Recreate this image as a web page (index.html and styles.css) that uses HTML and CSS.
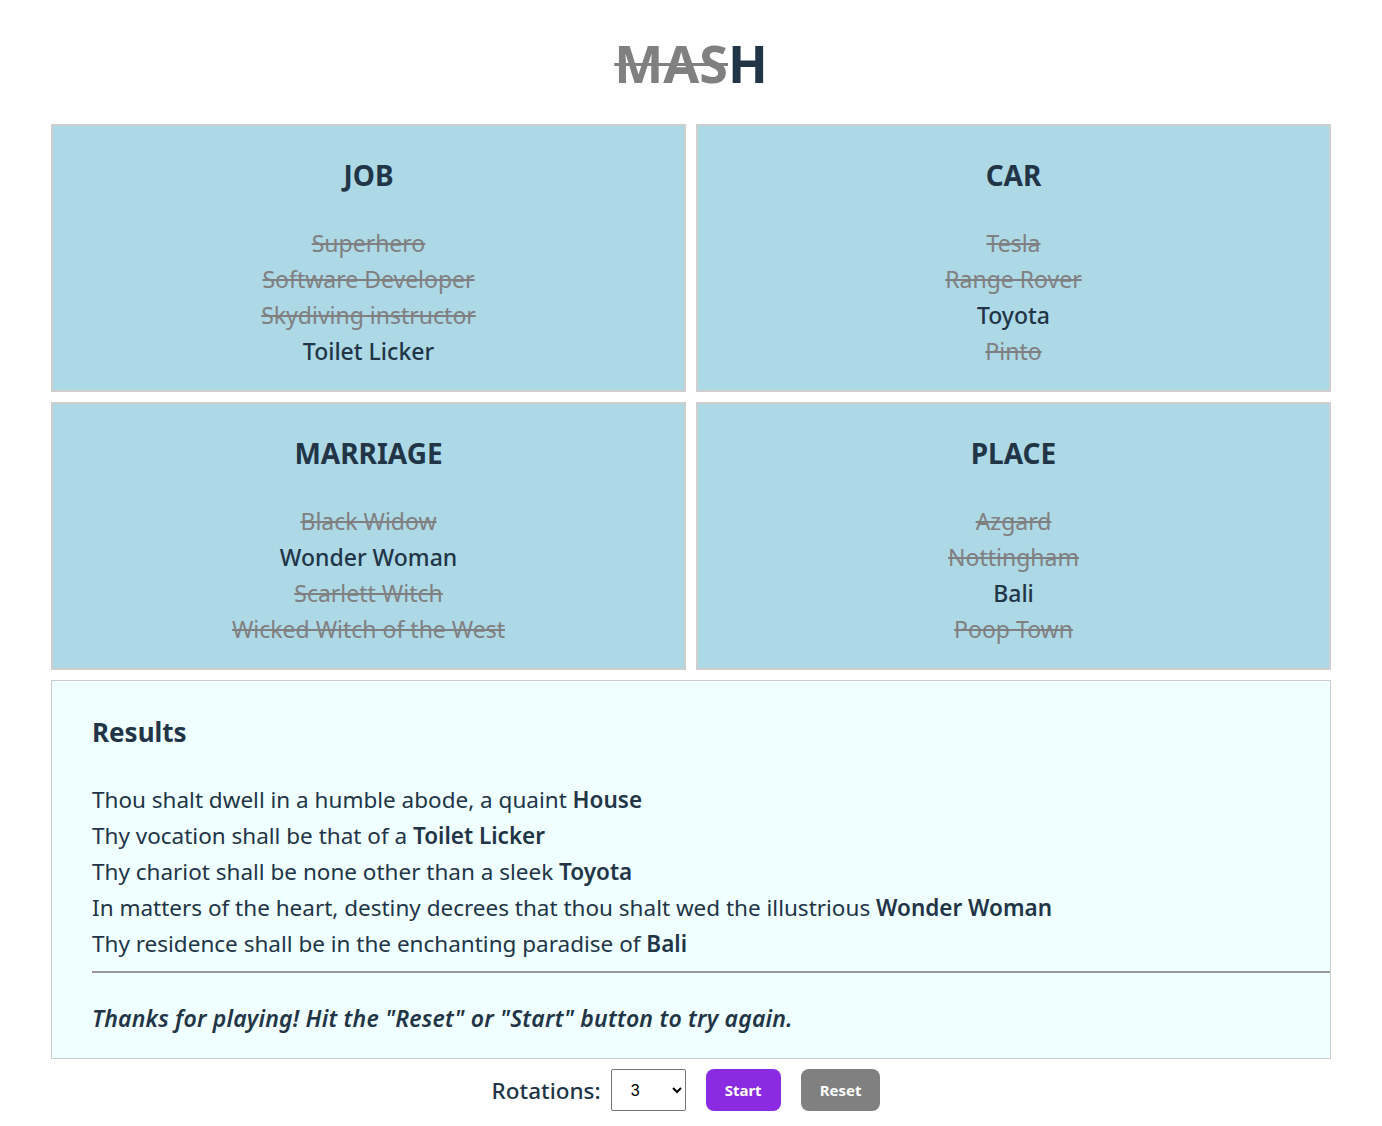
FILE: index.html
```html
<!DOCTYPE html>
<html lang="en">
<head>
<meta charset="utf-8">
<title>MASH</title>
<link rel="stylesheet" href="styles.css">
</head>
<body>
<div class="root">
  <h1 class="title"><span class="struck">MAS</span>H</h1>
  <div class="grid">
    <section class="card">
      <h2 class="card-title">JOB</h2>
      <ul class="options">
        <li class="out">Superhero</li>
        <li class="out">Software Developer</li>
        <li class="out">Skydiving instructor</li>
        <li>Toilet Licker</li>
      </ul>
    </section>
    <section class="card">
      <h2 class="card-title">CAR</h2>
      <ul class="options">
        <li class="out">Tesla</li>
        <li class="out">Range Rover</li>
        <li>Toyota</li>
        <li class="out">Pinto</li>
      </ul>
    </section>
    <section class="card">
      <h2 class="card-title">MARRIAGE</h2>
      <ul class="options">
        <li class="out">Black Widow</li>
        <li>Wonder Woman</li>
        <li class="out">Scarlett Witch</li>
        <li class="out">Wicked Witch of the West</li>
      </ul>
    </section>
    <section class="card">
      <h2 class="card-title">PLACE</h2>
      <ul class="options">
        <li class="out">Azgard</li>
        <li class="out">Nottingham</li>
        <li>Bali</li>
        <li class="out">Poop Town</li>
      </ul>
    </section>
  </div>
  <section class="results">
    <h2 class="results-title">Results</h2>
    <div class="results-lines">
      <p>Thou shalt dwell in a humble abode, a quaint <b>House</b></p>
      <p>Thy vocation shall be that of a <b>Toilet Licker</b></p>
      <p>Thy chariot shall be none other than a sleek <b>Toyota</b></p>
      <p>In matters of the heart, destiny decrees that thou shalt wed the illustrious <b>Wonder Woman</b></p>
      <p>Thy residence shall be in the enchanting paradise of <b>Bali</b></p>
    </div>
    <hr class="divider">
    <p class="thanks">Thanks for playing! Hit the "Reset" or "Start" button to try again.</p>
  </section>
  <div class="controls">
    <label class="rot-label" for="rot">Rotations:</label>
    <select id="rot" class="rot-select">
      <option>1</option><option>2</option><option selected>3</option><option>4</option><option>5</option>
    </select>
    <button class="btn btn-start">Start</button>
    <button class="btn btn-reset">Reset</button>
  </div>
</div>
</body>
</html>
```
FILE: styles.css
```css
* { box-sizing: border-box; }
body {
  margin: 0;
  font-family: "Noto Sans", "Open Sans", sans-serif;
  color: #213547;
  background: #fff;
}
.root {
  width: 1280px;
  margin: 0 auto;
  text-align: center;
}
.title {
  margin: 0;
  padding-top: 29px;
  height: 124px;
  font-size: 52px;
  line-height: 68px;
  font-weight: 700;
  color: #213547;
}
.struck {
  color: #808080;
  text-decoration: line-through;
  text-decoration-thickness: 3px;
}
.grid {
  display: grid;
  grid-template-columns: 1fr 1fr;
  gap: 10px;
}
.card {
  background: #add8e6;
  border: 2px solid #cfcfcf;
  padding: 31px 0 21px;
}
.card-title {
  margin: 0 0 32px;
  font-size: 28px;
  line-height: 36px;
  font-weight: 700;
}
.options {
  list-style: none;
  margin: 0;
  padding: 0;
  font-size: 23px;
  line-height: 36px;
  font-weight: 500;
}
.out {
  color: #808080;
  text-decoration: line-through;
  font-weight: 400;
}
.results {
  margin-top: 10px;
  background: #f0ffff;
  border: 1px solid #cccccc;
  padding: 33px 0 22px 40px;
  text-align: left;
}
.results-title {
  margin: 0 0 32px;
  font-size: 26px;
  line-height: 36px;
  font-weight: 700;
}
.results-lines p {
  margin: 0;
  font-size: 22.5px;
  line-height: 36px;
}
.results-lines b { font-weight: 600; }
.divider {
  margin: 9px 0 27px;
  border: 0;
  border-top: 2px solid #999;
}
.thanks {
  margin: 0;
  font-size: 23px;
  letter-spacing: 0.2px;
  line-height: 36px;
  font-style: italic;
  font-weight: 600;
}
.controls {
  display: flex;
  justify-content: center;
  align-items: center;
  margin-top: 10px;
  padding-right: 10px;
}
.rot-label {
  font-size: 22.5px;
  font-weight: 500;
  margin-right: 10px;
}
.rot-select {
  width: 75px;
  height: 42px;
  padding-left: 15px;
  font-size: 16px;
  font-family: "Liberation Sans", Arial, sans-serif;
  border: 1px solid #767676;
  border-radius: 2px;
  background: #fff;
  margin-right: 20px;
}
.btn {
  height: 42px;
  padding: 0 19px;
  border: 0;
  border-radius: 8px;
  color: #fff;
  font-family: "Noto Sans", sans-serif;
  font-weight: 700;
  font-size: 15px;
}
.btn-start { background: #8a2be2; margin-right: 20px; }
.btn-reset { background: #808080; }
```
